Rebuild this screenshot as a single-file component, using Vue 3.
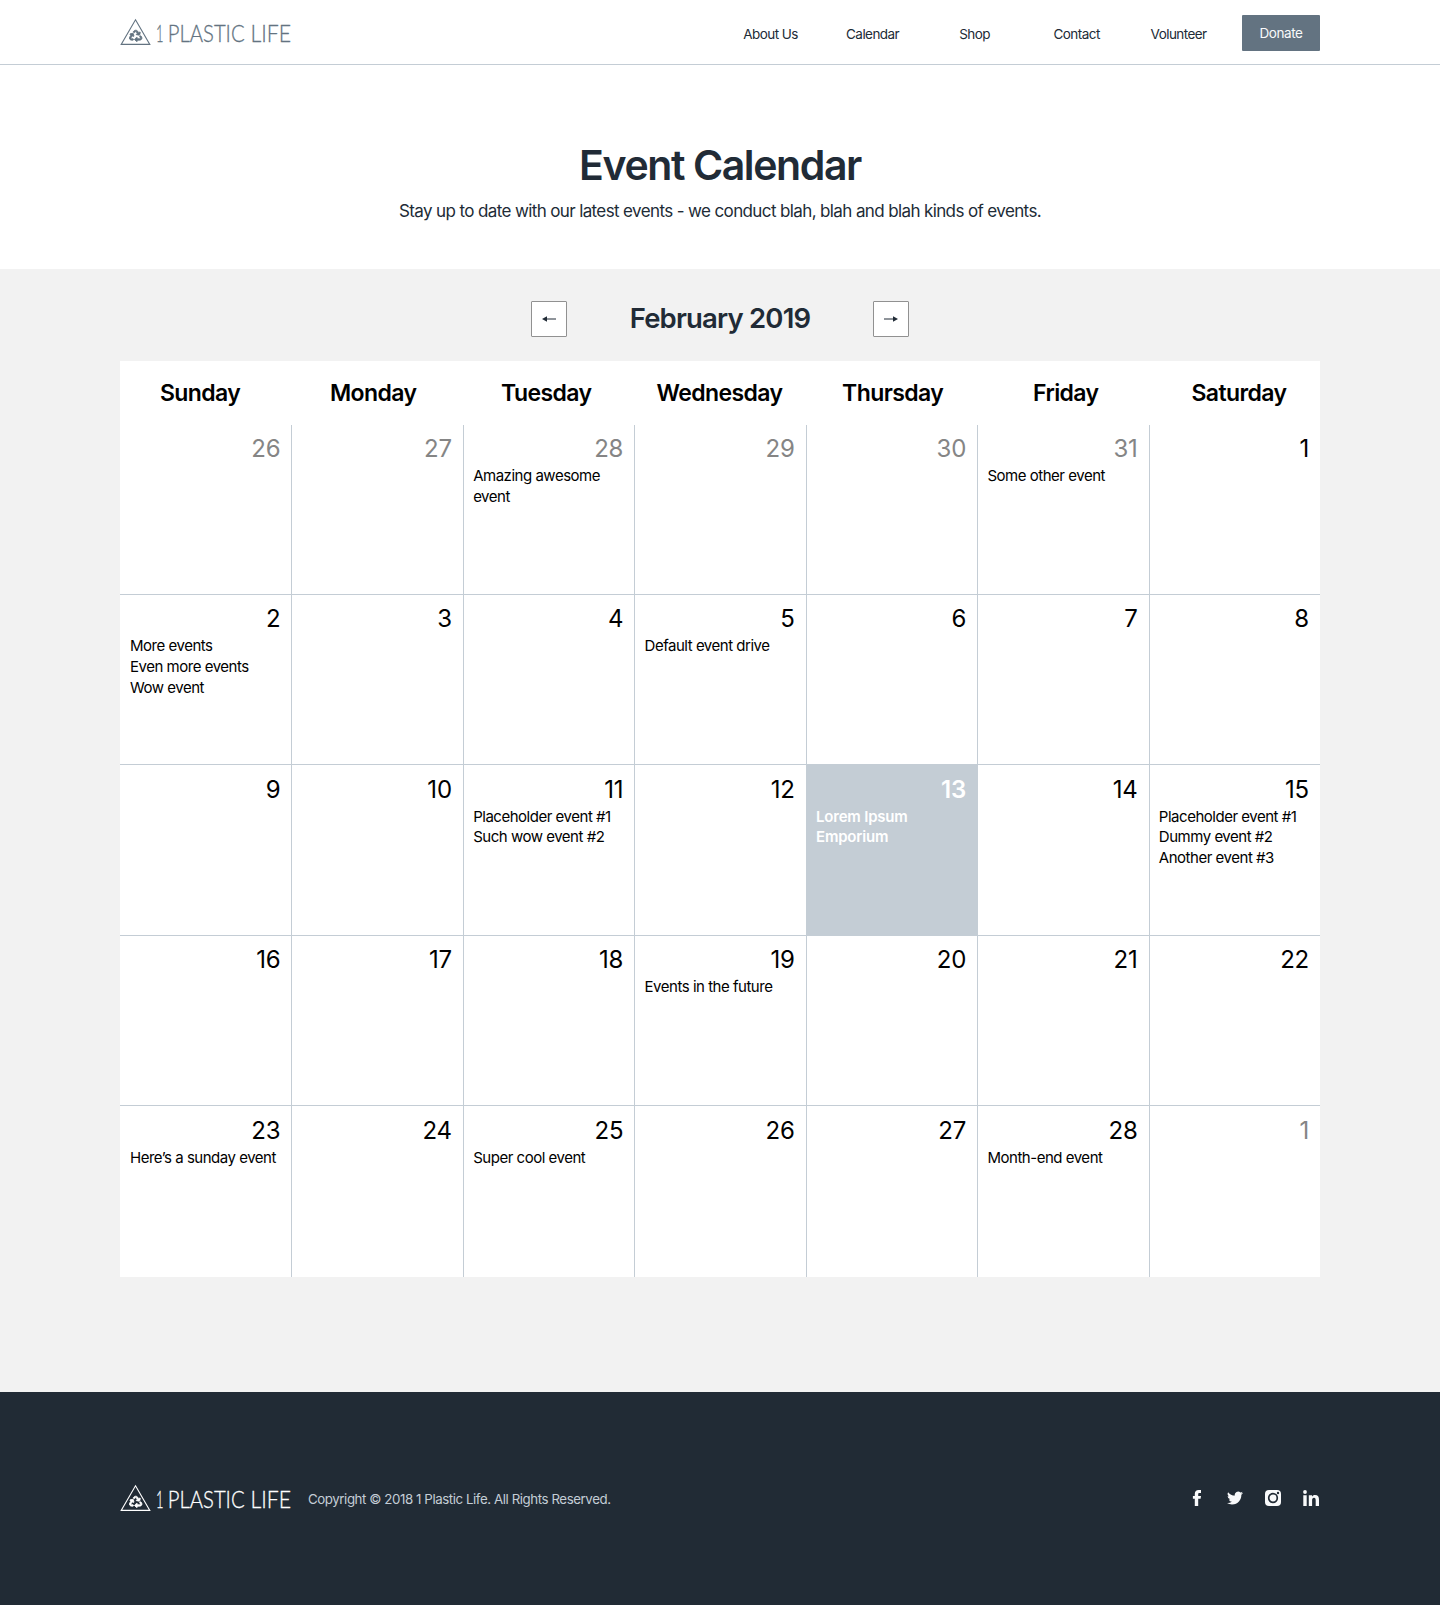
<script setup>
import { h } from 'vue'

const links = ['About Us', 'Calendar', 'Shop', 'Contact', 'Volunteer']
const weekdays = ['Sunday', 'Monday', 'Tuesday', 'Wednesday', 'Thursday', 'Friday', 'Saturday']

const events = {
  2: ['Amazing awesome event'],
  5: ['Some other event'],
  7: ['More events', 'Even more events', 'Wow event'],
  10: ['Default event drive'],
  16: ['Placeholder event #1', 'Such wow event #2'],
  18: ['Lorem Ipsum Emporium'],
  20: ['Placeholder event #1', 'Dummy event #2', 'Another event #3'],
  24: ['Events in the future'],
  28: ['Here’s a sunday event'],
  30: ['Super cool event'],
  33: ['Month-end event'],
}

const days = Array.from({ length: 35 }, (_, i) => ({
  number: i < 6 ? 26 + i : i < 34 ? i - 5 : 1,
  muted: i < 6 || i === 34,
  selected: i === 18,
  events: events[i] || [],
}))

const recycle =
  'M184.561 261.903c3.232 13.997-12.123 24.635-24.068 17.168l-40.736-25.455-50.867 81.402C55.606 356.273 70.96 384 96.012 384H148c6.627 0 12 5.373 12 12v40c0 6.627-5.373 12-12 12H96.115c-75.334 0-121.302-83.048-81.408-146.88l50.822-81.388-40.725-25.448c-12.081-7.547-8.966-25.961 4.879-29.158l110.237-25.45c8.611-1.988 17.201 3.381 19.189 11.99l25.452 110.237zm98.561-182.915l41.289 66.076-40.74 25.457c-12.051 7.528-9 25.953 4.879 29.158l110.237 25.45c8.672 1.999 17.215-3.438 19.189-11.99l25.45-110.237c3.197-13.844-11.99-24.719-24.068-17.168l-40.687 25.424-41.263-66.082c-37.521-60.033-125.209-60.171-162.816 0l-17.963 28.766c-3.51 5.62-1.8 13.021 3.82 16.533l33.919 21.195c5.62 3.512 13.024 1.803 16.536-3.817l17.961-28.743c12.712-20.341 41.973-19.676 54.257-.022zM497.288 301.12l-27.515-44.065c-3.511-5.623-10.916-7.334-16.538-3.821l-33.861 21.159c-5.62 3.512-7.33 10.915-3.818 16.536l27.564 44.112c13.257 21.211-2.057 48.96-27.136 48.96H320V336.02c0-14.213-17.242-21.383-27.313-11.313l-80 79.981c-6.249 6.248-6.249 16.379 0 22.627l80 79.989C302.689 517.308 320 510.3 320 495.989V448h95.88c75.274 0 121.335-82.997 81.408-146.88z'

const words = [
  { text: '1', x: 36, length: 7.5 },
  { text: 'PLASTIC', x: 47.8, length: 76.8 },
  { text: 'LIFE', x: 130.4, length: 40.6 },
]

const BrandLogo = () =>
  h('svg', { width: 180, height: 28, viewBox: '0 0 180 28', fill: 'currentColor' }, [
    h('path', { d: 'M15.5 1.8L29.8 26.4H1.2z', fill: 'none', stroke: 'currentColor', 'stroke-width': 1.1 }),
    h('path', {
      d: recycle,
      stroke: 'currentColor',
      'stroke-width': 36,
      transform: 'translate(9.4 12.2) scale(.0246 .0222)',
    }),
    h(
      'g',
      {
        'font-family': 'Lato, sans-serif',
        'font-weight': 300,
        'font-size': 24,
        stroke: 'currentColor',
        'stroke-width': 0.3,
      },
      words.map((w) =>
        h('text', { x: w.x, y: 23.7, textLength: w.length, lengthAdjust: 'spacingAndGlyphs' }, w.text),
      ),
    ),
  ])
</script>

<template>
  <div class="page">
    <header class="header">
      <div class="container header-row">
        <BrandLogo class="brand" />
        <nav class="nav">
          <a v-for="link in links" :key="link" class="nav-link">{{ link }}</a>
          <a class="donate">Donate</a>
        </nav>
      </div>
    </header>

    <section class="hero">
      <h1>Event Calendar</h1>
      <p>Stay up to date with our latest events - we conduct blah, blah and blah kinds of events.</p>
    </section>

    <main class="main">
      <div class="month">
        <button class="arrow" aria-label="Previous month">
          <svg width="16" height="8" viewBox="0 0 16 8">
            <path d="M5 4H15" stroke="#212b36" stroke-width="1" />
            <path d="M1 4L6 1.2V6.8z" fill="#212b36" />
          </svg>
        </button>
        <h2>February 2019</h2>
        <button class="arrow" aria-label="Next month">
          <svg width="16" height="8" viewBox="0 0 16 8">
            <path d="M1 4H11" stroke="#212b36" stroke-width="1" />
            <path d="M15 4L10 1.2V6.8z" fill="#212b36" />
          </svg>
        </button>
      </div>

      <div class="calendar">
        <div class="weekdays">
          <div v-for="day in weekdays" :key="day">{{ day }}</div>
        </div>
        <div class="days">
          <div
            v-for="(day, i) in days"
            :key="i"
            class="day"
            :class="{ muted: day.muted, selected: day.selected, first: i % 7 === 0, last: i >= 28 }"
          >
            <div class="number">{{ day.number }}</div>
            <ul class="events">
              <li v-for="event in day.events" :key="event">{{ event }}</li>
            </ul>
          </div>
        </div>
      </div>
    </main>

    <footer class="footer">
      <div class="container footer-row">
        <BrandLogo class="brand" />
        <span class="copyright">Copyright © 2018 1 Plastic Life. All Rights Reserved.</span>
        <div class="social">
          <svg width="16" height="16" viewBox="0 0 16 16">
            <path d="M5.800 16V8.800H3.900V6H5.800V4C5.800 1.400 7.300 0 9.600 0H12v2.900h-1.500C9.500 2.900 9.200 3.300 9.200 4.200V6H12l-.4 2.800H9.200V16z" />
          </svg>
          <svg width="16" height="16" viewBox="0 0 24 24">
            <path d="M24 4.6a10 10 0 0 1-2.8.8 4.9 4.9 0 0 0 2.1-2.7 9.9 9.9 0 0 1-3.1 1.2 4.9 4.9 0 0 0-8.4 4.5A14 14 0 0 1 1.7 3.2a4.9 4.9 0 0 0 1.5 6.5 4.9 4.9 0 0 1-2.2-.6v.1a4.9 4.9 0 0 0 3.9 4.8 5 5 0 0 1-2.2.1 4.9 4.9 0 0 0 4.6 3.4A9.9 9.9 0 0 1 0 19.5a14 14 0 0 0 7.5 2.2c9.1 0 14-7.5 14-14v-.6A10 10 0 0 0 24 4.6z" />
          </svg>
          <svg width="16" height="16" viewBox="0 0 16 16">
            <rect width="16" height="16" rx="4" />
            <circle cx="8" cy="8" r="4.3" fill="none" stroke="#212b35" stroke-width="1.7" />
            <circle cx="13" cy="3" r="1.2" fill="#212b35" />
          </svg>
          <svg width="16" height="16" viewBox="0 0 16 16">
            <circle cx="2" cy="2" r="1.9" />
            <path d="M.3 5.2h3.400V16H.3zM5.800 5.200h3.200v1.500C9.500 5.600 10.600 5 12 5c3 0 4 1.900 4 4.800V16h-3.300v-5.500c0-1.500-.3-2.700-1.700-2.700S9.100 8.900 9.100 10.400V16H5.800z" />
          </svg>
        </div>
      </div>
    </footer>
  </div>
</template>

<style>
body {
  margin: 0;
}
</style>

<style scoped>
.page {
  display: flex;
  flex-direction: column;
  height: 1605px;
  background: #fff;
  color: #212b36;
  font-family: Inter, 'Liberation Sans', sans-serif;
}
.container {
  width: 1200px;
  margin: 0 auto;
}
.header {
  box-sizing: border-box;
  height: 65px;
  border-bottom: 1px solid #c4cdd5;
}
.header-row {
  display: flex;
  align-items: flex-start;
  justify-content: space-between;
}
.brand {
  flex: none;
  color: #637381;
}
.header .brand {
  margin-top: 18px;
}
.nav {
  display: flex;
  margin-top: 15px;
  font-size: 13.5px;
  letter-spacing: -0.55px;
}
.nav-link {
  width: 102px;
  line-height: 38px;
  text-align: center;
}
.donate {
  width: 78px;
  height: 36px;
  margin-left: 12.4px;
  border-radius: 1px;
  background: #637381;
  color: #f9fafb;
  line-height: 36px;
  letter-spacing: -0.4px;
  text-align: center;
}
.hero {
  height: 204px;
  text-align: center;
}
h1 {
  margin: 74px 0 0;
  font-size: 41px;
  font-weight: 600;
  line-height: 52px;
  letter-spacing: -1.4px;
}
.hero p {
  margin: 6px 0 0;
  font-size: 17px;
  line-height: 28px;
  letter-spacing: -0.62px;
}
.main {
  height: 1123px;
  background: #f2f2f2;
}
.month {
  display: flex;
  align-items: center;
  justify-content: space-between;
  width: 378px;
  height: 36px;
  margin: 32px auto 24px;
}
h2 {
  margin: 0 0 2px;
  font-size: 27.5px;
  font-weight: 600;
  line-height: 36px;
  letter-spacing: -0.82px;
}
.arrow {
  display: flex;
  align-items: center;
  justify-content: center;
  box-sizing: border-box;
  width: 36px;
  height: 36px;
  padding: 0;
  border: 1px solid #919191;
  border-radius: 1px;
  background: #fff;
}
.calendar {
  display: flex;
  flex-direction: column;
  width: 1200px;
  height: 916px;
  margin: 0 auto;
  background: #fff;
  color: #000;
}
.weekdays {
  display: grid;
  grid-template-columns: repeat(7, 1fr);
  height: 64px;
  margin: 0 -5.5px 0 -6.5px;
  font-size: 23px;
  font-weight: 600;
  line-height: 64px;
  letter-spacing: -0.58px;
  text-align: center;
}
.days {
  display: grid;
  flex: 1;
  grid-template-columns: repeat(7, 1fr);
  grid-template-rows: 170.3px 170.15px 170.75px 170.25px 170.55px;
}
.day {
  box-sizing: border-box;
  min-width: 0;
  padding: 9.1px 11px 0 9.3px;
  border-bottom: 1px solid #c4cdd5;
  border-left: 1px solid #c4cdd5;
}
.day.first {
  padding-left: 10px;
  border-left: 0;
}
.day.last {
  border-bottom: 0;
}
.number {
  font-size: 24px;
  line-height: 30px;
  letter-spacing: -0.2px;
  text-align: right;
}
.muted .number {
  color: #858585;
}
.events {
  margin: 2px 0 0;
  padding: 0;
  list-style: none;
  font-size: 15px;
  line-height: 20.6px;
  letter-spacing: -0.48px;
}
.day.selected {
  margin: -1px -1px 0 0;
  padding-top: 10.1px;
  padding-right: 12px;
  background: #c4cdd5;
  color: #fff;
  font-weight: 600;
}
.selected .events {
  max-width: 110px;
  letter-spacing: -0.2px;
}
.footer {
  flex: 1;
  background: #212b35;
}
.footer-row {
  display: flex;
  padding-top: 92px;
}
.footer .brand {
  color: #fff;
}
.copyright {
  margin-left: 8px;
  color: #c4cdd5;
  font-size: 13.3px;
  line-height: 30px;
  letter-spacing: -0.43px;
}
.social {
  display: flex;
  gap: 22px;
  margin: 6px 1px 0 auto;
  fill: #f9fafb;
}
</style>
